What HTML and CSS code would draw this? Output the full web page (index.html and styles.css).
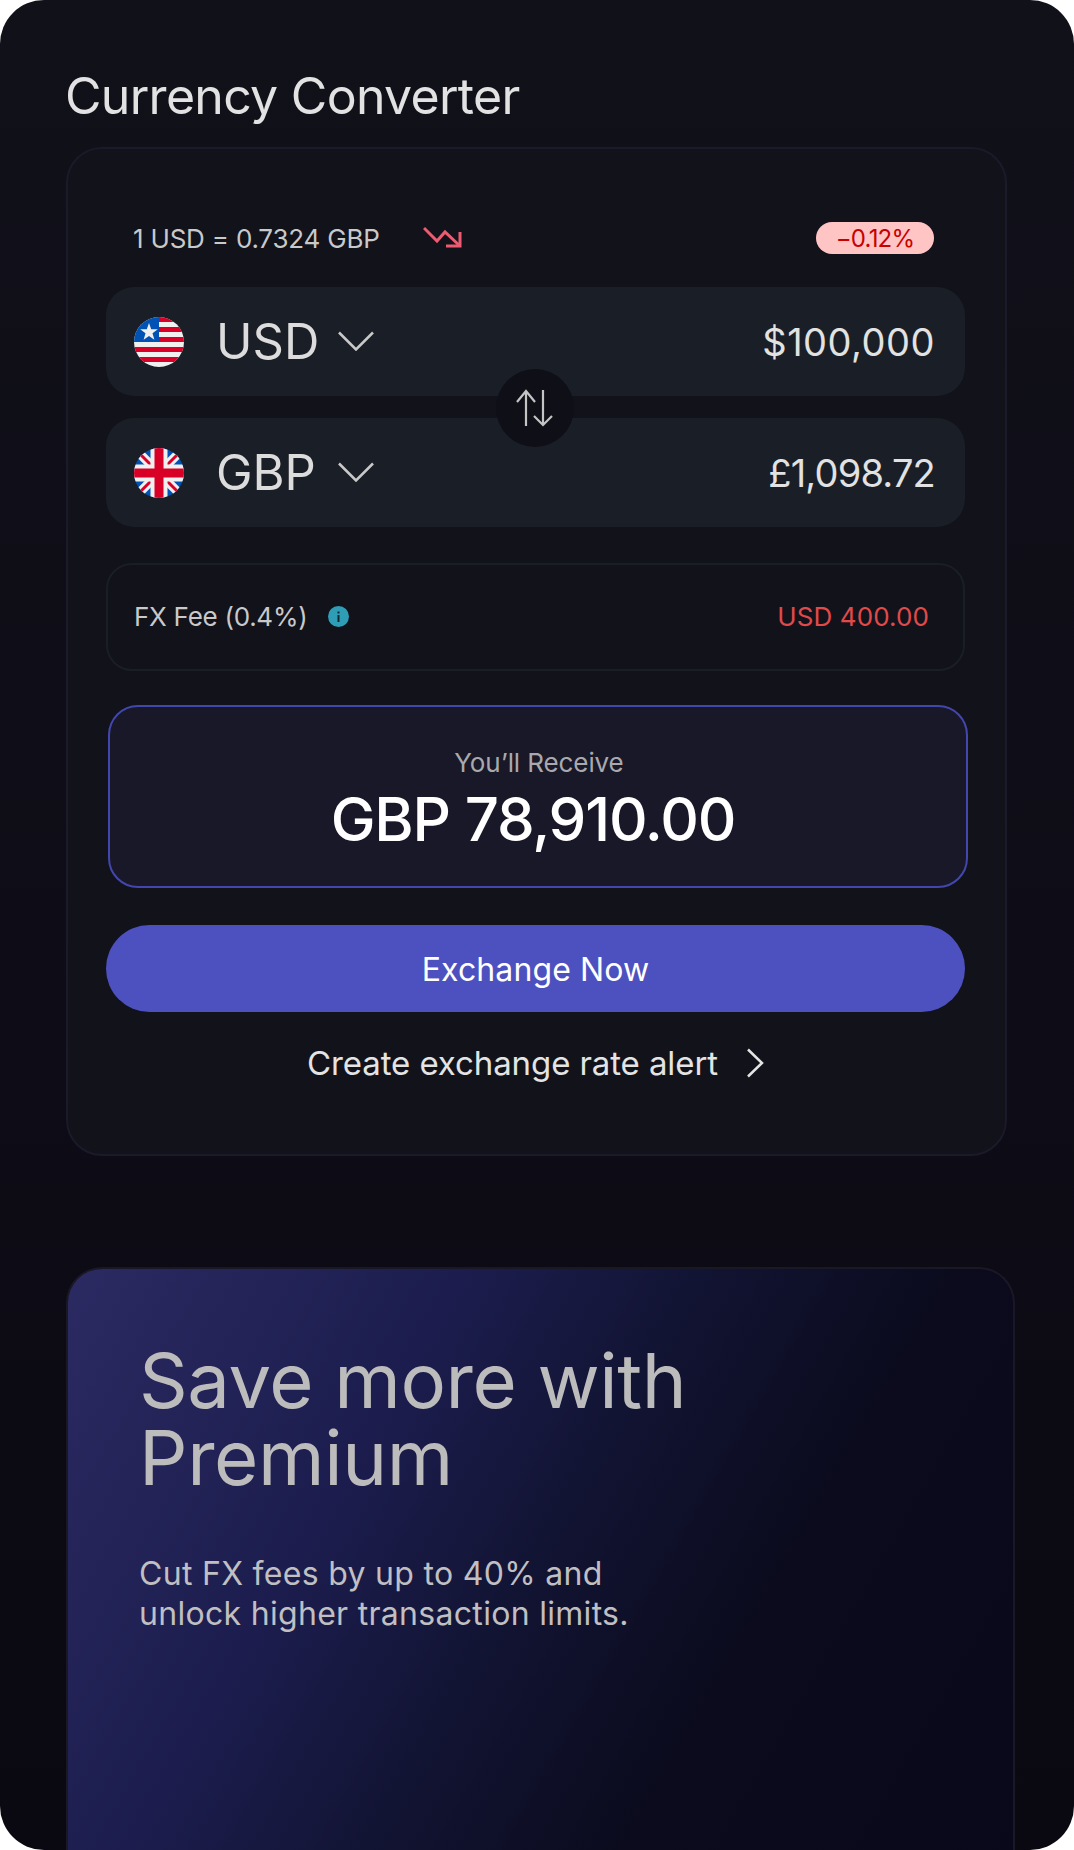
FILE: index.html
```html
<!DOCTYPE html>
<html lang="en">
<head>
<meta charset="utf-8">
<title>Currency Converter</title>
<link rel="stylesheet" href="styles.css">
</head>
<body>
<main class="phone">
  <h1 class="title">Currency Converter</h1>
  <section class="card">
    <div class="rate">
      <div class="rate-left">
        <span class="rate-text">1 USD = 0.7324 GBP</span>
        <svg class="trend" viewBox="12 12 40 24" fill="none" stroke="#ee5a70" stroke-width="3"><path d="M13 14l13 13 8-9 15 14"/><path d="M49 18v14H35"/></svg>
      </div>
      <span class="pill">−0.12%</span>
    </div>
    <div class="exchange">
      <div class="row">
        <svg class="flag" viewBox="0 0 50 50">
          <defs><clipPath id="c1"><circle cx="25" cy="25" r="25"/></clipPath></defs>
          <g clip-path="url(#c1)">
            <rect width="50" height="50" fill="#f0f0f0"/>
            <rect x="25" y="0" width="25" height="5" fill="#d80027"/>
            <rect x="25" y="10" width="25" height="5" fill="#d80027"/>
            <rect x="25" y="20" width="25" height="5" fill="#d80027"/>
            <rect y="30" width="50" height="5" fill="#d80027"/>
            <rect y="40" width="50" height="5" fill="#d80027"/>
            <rect width="25" height="25" fill="#0052b4"/>
            <path d="M15 8l2.200 6.300h6.600l-5.300 4 1.900 6.400-5.400-3.800-5.400 3.800 1.900-6.400-5.300-4h6.600z" fill="#f0f0f0" transform="translate(0 -2)"/>
          </g>
        </svg>
        <span class="code">USD</span>
        <svg class="chevron" viewBox="0 0 36 20" fill="none" stroke="#c9c9c9" stroke-width="2.500"><path d="M1 1.500l17 17 17-17"/></svg>
        <span class="amount amount-wide">$100,000</span>
      </div>
      <div class="row">
        <svg class="flag" viewBox="0 0 50 50">
          <defs><clipPath id="c2"><circle cx="25" cy="25" r="25"/></clipPath></defs>
          <g clip-path="url(#c2)">
            <rect width="50" height="50" fill="#0052b4"/>
            <path d="M0 0L50 50M50 0L0 50" stroke="#f0f0f0" stroke-width="9"/>
            <path d="M4 4L20 20M46 4L30 20M4 46L20 30M46 46L30 30" stroke="#d80027" stroke-width="3"/>
            <path d="M25 0V50M0 25H50" stroke="#f0f0f0" stroke-width="17"/>
            <path d="M25 0V50M0 25H50" stroke="#d80027" stroke-width="9"/>
          </g>
        </svg>
        <span class="code">GBP</span>
        <svg class="chevron" viewBox="0 0 36 20" fill="none" stroke="#c9c9c9" stroke-width="2.500"><path d="M1 1.500l17 17 17-17"/></svg>
        <span class="amount">£1,098.72</span>
      </div>
      <button class="swap" aria-label="Swap">
        <svg viewBox="0 0 38 38" fill="none" stroke="#c4c4c4" stroke-width="2.200"><path d="M10 37V2M1 13L10 2l9 11"/><path d="M27 1v35M18 27l9 9 9-9"/></svg>
      </button>
    </div>
    <div class="fee">
      <div class="fee-left">
        <span>FX Fee (0.4%)</span>
        <svg class="info" viewBox="0 0 21 21"><circle cx="10.500" cy="10.500" r="10.500" fill="#2f9db5"/><rect x="9.500" y="9" width="2" height="7" fill="#0f2a33"/><rect x="9.500" y="5.500" width="2" height="2" fill="#0f2a33"/></svg>
      </div>
      <span class="fee-value">USD 400.00</span>
    </div>
    <div class="receive">
      <span class="receive-label">You’ll Receive</span>
      <strong class="receive-value">GBP 78,910.00</strong>
    </div>
    <button class="cta">Exchange Now</button>
    <a class="alert">
      <span>Create exchange rate alert</span>
      <svg class="arrow" viewBox="0 0 18 30" fill="none" stroke="#e4e4e4" stroke-width="2.500"><path d="M2 1.500L16 15 2 28.500"/></svg>
    </a>
  </section>
  <section class="promo">
    <h2 class="promo-title">Save more with<br>Premium</h2>
    <p class="promo-text">Cut FX fees by up to 40% and<br>unlock higher transaction limits.</p>
  </section>
</main>
</body>
</html>
```
FILE: styles.css
```css
* { box-sizing: border-box; }
html, body { margin: 0; padding: 0; background: #fff; }
body { font-family: Inter, "Noto Sans", sans-serif; }
.phone {
  width: 1074px;
  height: 1850px;
  overflow: hidden;
  border-radius: 44px;
  background: linear-gradient(180deg, #11111a 0%, #0e0c16 55%, #0a0810 100%);
  padding: 66px 66px 0;
}
.title {
  margin: 0 0 21px -1px;
  font-size: 50px;
  line-height: 60px;
  font-weight: 400;
  letter-spacing: -0.7px;
  color: #e2e2e2;
}
.card {
  width: 941px;
  height: 1009px;
  margin-bottom: 111px;
  background: #11121a;
  border: 2px solid #1b1a28;
  border-radius: 36px;
  padding: 71px 38px 0;
  display: flex;
  flex-direction: column;
  align-items: stretch;
}
.rate {
  display: flex;
  align-items: center;
  justify-content: space-between;
  height: 32px;
  padding: 0 33px 0 27px;
  margin-top: 2px;
}
.rate-left { display: flex; align-items: center; gap: 43px; }
.rate-text { font-size: 26px; letter-spacing: -0.2px; color: #c9c9c9; }
.trend { width: 40px; height: 24px; }
.pill {
  width: 118px;
  height: 32px;
  border-radius: 16px;
  background: #ffc4c4;
  color: #c90000;
  font-size: 24px;
  letter-spacing: -0.8px;
  display: flex;
  align-items: center;
  justify-content: center;
}
.exchange {
  position: relative;
  margin-top: 33px;
  display: flex;
  flex-direction: column;
  gap: 22px;
  width: 859px;
}
.row {
  height: 109px;
  border-radius: 28px;
  background: #1a1e26;
  display: flex;
  align-items: center;
  padding: 0 30px 0 28px;
  color: #dfdfdf;
}
.flag { width: 50px; height: 50px; flex: none; }
.code { font-size: 49px; margin-left: 32px; width: 104px; flex: none; line-height: 1; color: #dcdcdc; }
.chevron { width: 36px; height: 20px; margin-left: 18px; margin-top: -2px; }
.amount { margin-left: auto; font-size: 38px; letter-spacing: -0.8px; color: #e2e2e2; }
.amount-wide { letter-spacing: 0.5px; }
.swap {
  position: absolute;
  left: 390px;
  top: 82px;
  width: 78px;
  height: 78px;
  border: 0;
  padding: 0;
  border-radius: 50%;
  background: #0f1017;
  display: flex;
  align-items: center;
  justify-content: center;
}
.swap svg { width: 38px; height: 38px; }
.fee {
  width: 859px;
  height: 108px;
  margin-top: 36px;
  border: 2px solid #1a1e26;
  border-radius: 26px;
  display: flex;
  align-items: center;
  justify-content: space-between;
  padding: 0 34px 2px 26px;
  font-size: 26px;
  color: #c9c9c9;
}
.fee-left { display: flex; align-items: center; gap: 21px; letter-spacing: -0.27px; }
.info { width: 21px; height: 21px; }
.fee-value { color: #e04a4a; letter-spacing: 0.1px; }
.receive {
  width: 860px;
  height: 183px;
  margin-top: 34px;
  margin-left: 2px;
  border: 2px solid #4347ad;
  border-radius: 30px;
  background: #181828;
  display: flex;
  flex-direction: column;
  align-items: center;
  padding-top: 39px;
}
.receive-label { font-size: 26px; line-height: 34px; letter-spacing: -0.1px; color: #a9a9ad; margin-left: 2px; }
.receive-value { font-size: 60px; line-height: 72px; font-weight: 500; letter-spacing: -1.2px; color: #fff; margin: 3px 10px 0 0; }
.cta {
  width: 859px;
  height: 87px;
  margin-top: 37px;
  border: 0;
  border-radius: 44px;
  background: #4d51bf;
  color: #fff;
  font: 400 32px Inter, sans-serif;
  letter-spacing: 0.1px;
  padding-top: 3px;
}
.alert {
  width: 859px;
  margin-top: 27px;
  height: 48px;
  display: flex;
  align-items: center;
  justify-content: center;
  gap: 28px;
  font-size: 33px;
  letter-spacing: -0.1px;
  color: #e4e4e4;
}
.arrow { width: 18px; height: 30px; }
.promo {
  width: 949px;
  height: 640px;
  border: 2px solid #1b1826;
  border-bottom: 0;
  border-radius: 36px 36px 0 0;
  background: linear-gradient(120deg, #2b2a62 0%, #1c1d4e 30%, #111331 50%, #0b0b1d 68%, #09081a 100%);
  padding: 73px 71px 0;
}
.promo-title { margin: 0; font-size: 76px; line-height: 77px; font-weight: 400; letter-spacing: -0.4px; color: #bdbcbc; }
.promo-text { margin: 58px 0 0; font-size: 32px; line-height: 40px; letter-spacing: 0.3px; color: #c0bfc2; }
```
